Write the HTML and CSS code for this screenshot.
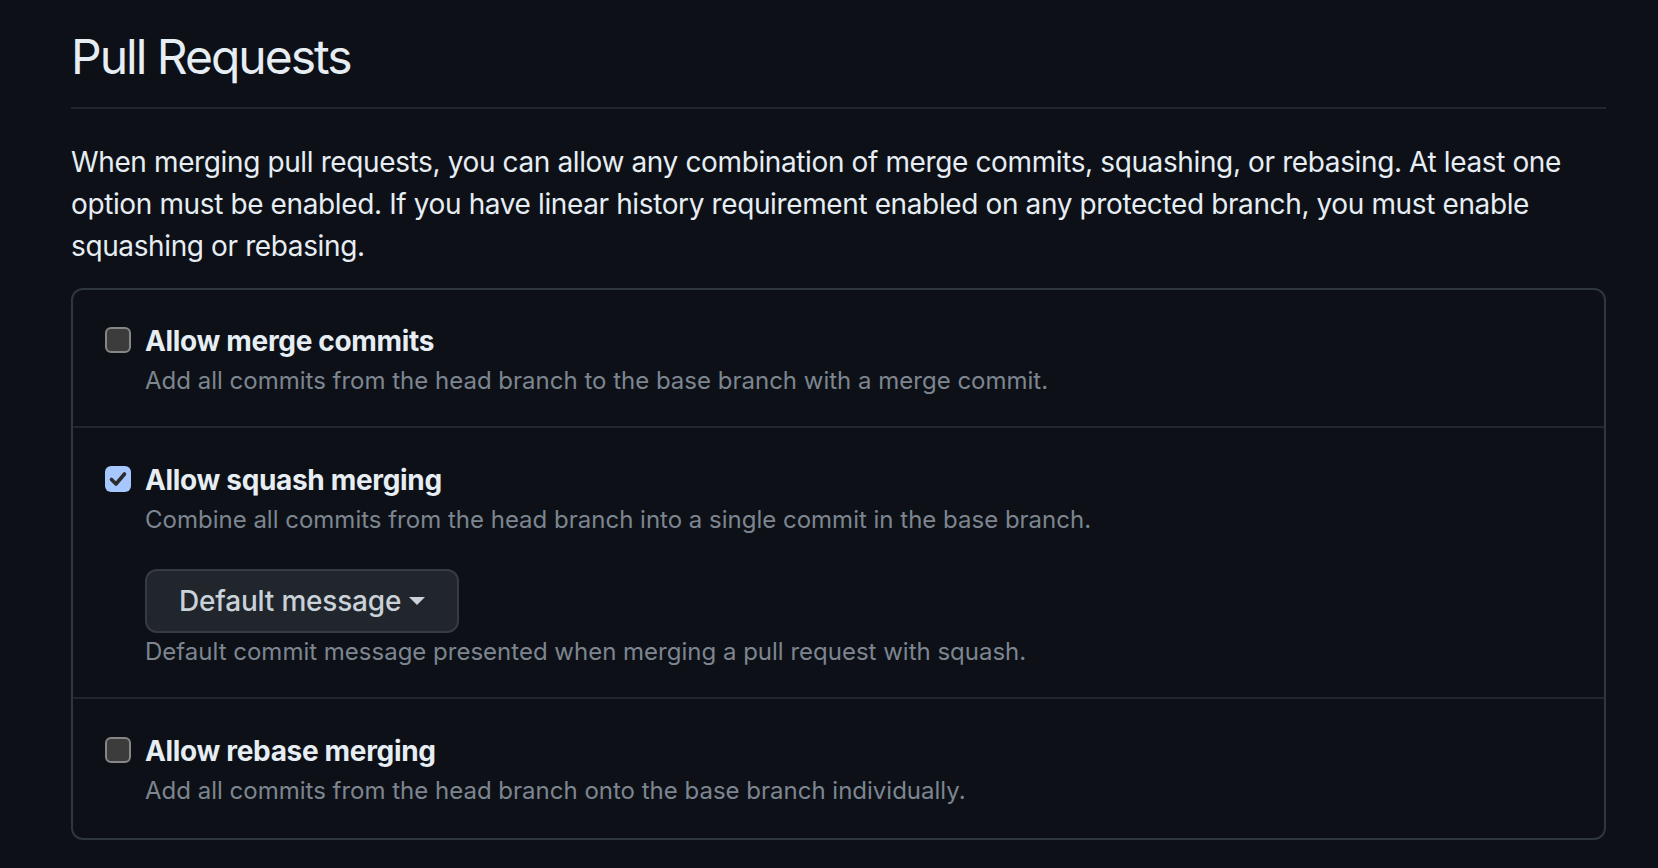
FILE: index.html
```html
<!DOCTYPE html>
<html lang="en">
<head>
<meta charset="utf-8">
<title>Pull Requests</title>
<link rel="stylesheet" href="styles.css">
</head>
<body>
<div class="page">
  <div class="subhead">
    <h2 class="subhead-heading">Pull Requests</h2>
  </div>
  <p class="intro">When merging pull requests, you can allow any combination of merge commits, squashing, or rebasing. At least one option must be enabled. If you have linear history requirement enabled on any protected branch, you must enable squashing or rebasing.</p>
  <div class="box">
    <div class="box-row row-merge">
      <div class="check">
        <span class="checkbox"></span>
        <div class="check-body">
          <div class="check-label">Allow merge commits</div>
          <div class="note">Add all commits from the head branch to the base branch with a merge commit.</div>
        </div>
      </div>
    </div>
    <div class="box-row row-squash">
      <div class="check">
        <span class="checkbox checked">
          <svg viewBox="0 0 26 26" width="26" height="26"><path d="M6.5 13.5 L11 18 L19.5 8" fill="none" stroke="#2c2c2c" stroke-width="3.6" stroke-linecap="round" stroke-linejoin="round"/></svg>
        </span>
        <div class="check-body">
          <div class="check-label">Allow squash merging</div>
          <div class="note">Combine all commits from the head branch into a single commit in the base branch.</div>
          <button class="btn" type="button">Default message<svg class="caret" viewBox="0 0 16 8" width="16" height="8"><path d="M0 0 L16 0 L8 8 Z" fill="#c9d1d9"/></svg></button>
          <div class="note">Default commit message presented when merging a pull request with squash.</div>
        </div>
      </div>
    </div>
    <div class="box-row row-rebase">
      <div class="check">
        <span class="checkbox"></span>
        <div class="check-body">
          <div class="check-label">Allow rebase merging</div>
          <div class="note">Add all commits from the head branch onto the base branch individually.</div>
        </div>
      </div>
    </div>
  </div>
</div>
</body>
</html>
```
FILE: styles.css
```css
* { box-sizing: border-box; }
html, body {
  margin: 0;
  padding: 0;
  background: #0d1117;
}
body {
  font-family: Inter, "Noto Sans", "Liberation Sans", sans-serif;
  color: #e6edf3;
  height: 868px;
  overflow: hidden;
}
.page {
  width: 1535px;
  margin-left: 71px;
}
.subhead {
  padding-top: 21px;
  padding-bottom: 14px;
  border-bottom: 2px solid #21262d;
}
.subhead-heading {
  margin: 0;
  font-size: 48px;
  line-height: 72px;
  font-weight: 400;
  letter-spacing: -2px;
  color: #e6edf3;
}
.intro {
  margin: 32px 0 21px;
  font-size: 28px;
  line-height: 42px;
  letter-spacing: -0.38px;
  color: #e6edf3;
}
.box {
  border: 2px solid #30363d;
  border-radius: 12px;
}
.box-row {
  padding: 30px 32px;
  border-top: 2px solid #21262d;
}
.row-merge {
  border-top: 0;
  padding-bottom: 27px;
}
.row-squash {
  padding-top: 31px;
  padding-bottom: 27px;
}
.row-rebase {
  padding-top: 31px;
  padding-bottom: 29px;
}
.check {
  display: flex;
  align-items: flex-start;
}
.checkbox {
  flex: none;
  width: 26px;
  height: 26px;
  margin-top: 7px;
  margin-right: 14px;
  border: 2px solid #868686;
  border-radius: 6px;
  background: #3c3c3c;
  display: flex;
}
.checkbox.checked {
  border: 0;
  background: #a6c8ff;
}
.check-label {
  font-size: 28px;
  line-height: 42px;
  font-weight: 700;
  letter-spacing: -0.33px;
  color: #e6edf3;
}
.note {
  margin-top: 1px;
  font-size: 24px;
  line-height: 36px;
  color: #7d8590;
}
.btn {
  display: flex;
  align-items: center;
  gap: 8px;
  height: 64px;
  margin-top: 31px;
  padding: 0 32px;
  border: 2px solid #363b42;
  border-radius: 12px;
  background: #21262d;
  color: #c9d1d9;
  font-family: inherit;
  font-size: 28px;
  font-weight: 500;
  letter-spacing: -0.2px;
  line-height: 42px;
}
.caret { flex: none; }
```
